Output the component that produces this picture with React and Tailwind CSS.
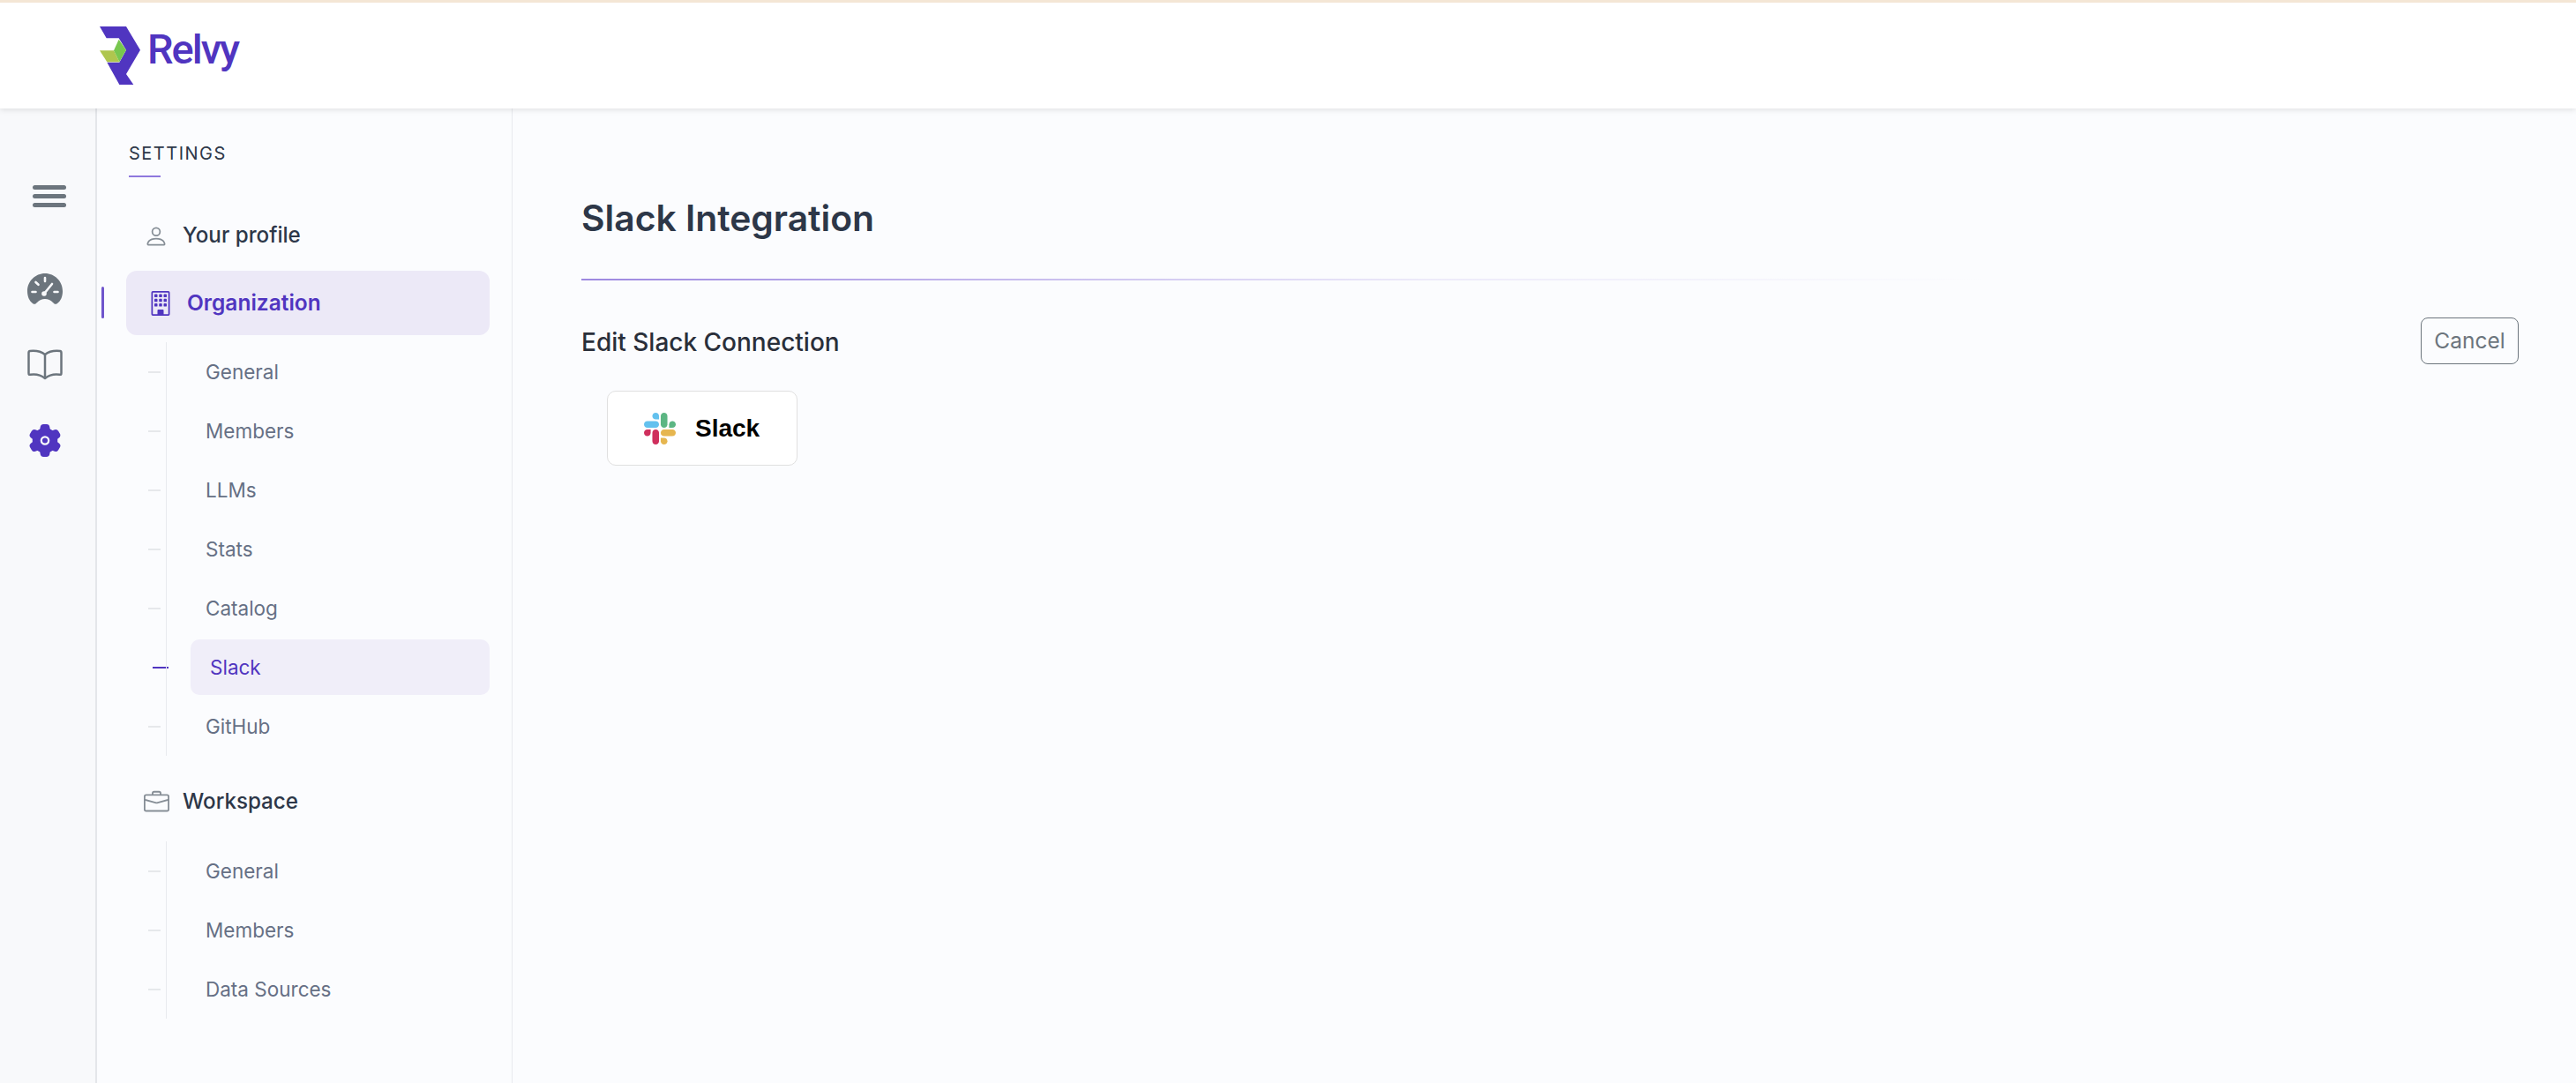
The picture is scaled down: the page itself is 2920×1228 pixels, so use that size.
import { BsBriefcase, BsBuilding, BsPerson } from "react-icons/bs";

const orgLinks = ["General", "Members", "LLMs", "Stats", "Catalog", "Slack", "GitHub"];
const workspaceLinks = ["General", "Members", "Data Sources"];

function Logo() {
  return (
    <svg viewBox="70 60 138 198" className="w-[46px] h-[66px] shrink-0">
      <polygon
        fill="#5035c0"
        points="70,60 160,60 208,140 160,222 185,258 137,258 95,182 137,182 160,140 135,100 93,100"
      />
      <polygon fill="#afc64e" points="70,142 118,142 137,181 95,181" />
      <polygon fill="#78c74f" points="118,142 135,104 160,140 137,181" />
    </svg>
  );
}

function Gauge() {
  return (
    <svg viewBox="0 0 40 35" className="w-[40px] h-[35px]">
      <path
        fill="#6c757d"
        d="M20 0C9 0 0 9 0 20c0 6 2 11 6 14 2 1.500 3 1 5-1 2.500-2.500 5.500-4 9-4s6.500 1.500 9 4c2 2 3 2.500 5 1 4-3 6-8 6-14C40 9 31 0 20 0z"
      />
      <g stroke="#f8f9fb" strokeWidth="2.600" strokeLinecap="round">
        <path d="M20 5v4M9.500 10l3 2.800M5.500 21h4M30.500 21h4" />
        <path d="M19 23l9-11" />
      </g>
      <circle cx="19" cy="23" r="2.800" fill="#f8f9fb" />
    </svg>
  );
}

function Book() {
  return (
    <svg viewBox="0 0 40 35" fill="none" stroke="#6c757d" strokeWidth="2.500" strokeLinejoin="round" className="w-[40px] h-[35px]">
      <path d="M20 6C15 2 8 1.500 3 2 1.500 2.200 1.500 3 1.500 4v23c0 2 .5 2 2 1.800C9 28 15 29 20 33c5-4 11-5 16.500-4.200 1.500.2 2 .2 2-1.800V4c0-1 0-1.800-1.500-2C32 1.500 25 2 20 6z" />
      <path d="M20 6v27" />
    </svg>
  );
}

function Gear() {
  return (
    <svg viewBox="2.700 2.250 18.600 19.500" className="w-[38px] h-[37px]">
      <path
        fill="#5035c0"
        fillRule="evenodd"
        d="M11.078 2.250c-.917 0-1.699.663-1.850 1.567L9.050 4.889c-.02.12-.115.26-.297.348a7.493 7.493 0 0 0-.986.57c-.166.115-.334.126-.45.083L6.300 5.508a1.875 1.875 0 0 0-2.282.819l-.922 1.597a1.875 1.875 0 0 0 .432 2.385l.84.692c.095.078.17.229.154.43a7.598 7.598 0 0 0 0 1.139c.015.2-.059.352-.153.43l-.841.692a1.875 1.875 0 0 0-.432 2.385l.922 1.597a1.875 1.875 0 0 0 2.282.818l1.019-.382c.115-.043.283-.031.45.082.312.214.641.405.985.57.182.088.277.228.297.35l.178 1.071c.151.904.933 1.567 1.850 1.567h1.844c.916 0 1.699-.663 1.850-1.567l.178-1.072c.02-.12.114-.26.297-.349.344-.165.673-.356.985-.57.167-.114.335-.125.45-.082l1.020.382a1.875 1.875 0 0 0 2.280-.819l.923-1.597a1.875 1.875 0 0 0-.432-2.385l-.84-.692c-.095-.078-.17-.229-.154-.43a7.614 7.614 0 0 0 0-1.139c-.016-.2.059-.352.153-.43l.84-.692c.708-.582.891-1.590.433-2.385l-.922-1.597a1.875 1.875 0 0 0-2.282-.818l-1.020.382c-.114.043-.282.031-.449-.083a7.490 7.490 0 0 0-.985-.57c-.183-.087-.277-.227-.297-.348l-.179-1.072a1.875 1.875 0 0 0-1.850-1.567h-1.843ZM12 14.800a2.800 2.800 0 1 0 0-5.600 2.800 2.800 0 0 0 0 5.600Z"
      />
      <circle cx="12" cy="12" r="1.600" fill="#5035c0" />
    </svg>
  );
}

function SlackLogo() {
  return (
    <svg viewBox="0 0 122.800 122.800" className="w-[36px] h-[36px] shrink-0">
      <path fill="#cf2f5d" d="M25.800 77.600c0 7.100-5.800 12.900-12.900 12.900S0 84.700 0 77.600s5.800-12.900 12.900-12.900h12.900v12.900z" />
      <path fill="#cf2f5d" d="M32.300 77.600c0-7.100 5.800-12.900 12.900-12.900s12.900 5.800 12.900 12.900v32.300c0 7.100-5.800 12.900-12.900 12.900s-12.900-5.800-12.900-12.900V77.600z" />
      <path fill="#63c1ee" d="M45.200 25.800c-7.100 0-12.900-5.800-12.900-12.900S38.100 0 45.200 0s12.900 5.800 12.900 12.900v12.900H45.200z" />
      <path fill="#63c1ee" d="M45.200 32.300c7.100 0 12.900 5.800 12.900 12.900s-5.800 12.900-12.900 12.900H12.900C5.800 58.100 0 52.300 0 45.200s5.800-12.900 12.900-12.900h32.300z" />
      <path fill="#5cb683" d="M97 45.200c0-7.100 5.800-12.900 12.900-12.900s12.900 5.800 12.900 12.900-5.800 12.900-12.900 12.900H97V45.200z" />
      <path fill="#5cb683" d="M90.500 45.200c0 7.100-5.800 12.900-12.900 12.900s-12.900-5.800-12.900-12.900V12.900C64.700 5.800 70.500 0 77.600 0s12.900 5.800 12.900 12.900v32.300z" />
      <path fill="#e6b64f" d="M77.600 97c7.100 0 12.900 5.800 12.900 12.900s-5.800 12.900-12.900 12.900-12.900-5.800-12.900-12.900V97h12.900z" />
      <path fill="#e6b64f" d="M77.600 90.500c-7.100 0-12.900-5.800-12.900-12.900s5.800-12.900 12.900-12.900h32.300c7.100 0 12.900 5.800 12.900 12.900s-5.800 12.900-12.900 12.900H77.600z" />
    </svg>
  );
}

function SubNav({ links, active }) {
  return (
    <div className="flex flex-col pl-[22px]">
      {links.map((label) => {
        const isActive = label === active;
        return (
          <div key={label} className="flex items-center h-[67px]">
            {isActive ? (
              <span className="w-[18px] h-[2px] ml-[5px] -mr-[3px] bg-[#5035c0]" />
            ) : (
              <span className="w-[14px] h-[2px] mr-[6px] bg-[#e6e8eb]" />
            )}
            <div className="flex items-center flex-1 h-full border-l border-[#e8eaee] pl-[27px]">
              {isActive ? (
                <div className="flex items-center w-[339px] h-[63px] pl-[22px] rounded-[10px] bg-[#f0eef9] text-[#5035c0] text-[22.500px]">
                  {label}
                </div>
              ) : (
                <div className="pl-[17px] text-[#667085] text-[22.500px]">{label}</div>
              )}
            </div>
          </div>
        );
      })}
    </div>
  );
}

export default function App() {
  return (
    <div className="flex flex-col w-[2920px] h-[1228px] overflow-hidden bg-[#fbfcfe] font-['Inter',sans-serif]">
      <header className="relative z-10 flex items-start h-[123px] pl-[113px] pt-[27px] bg-white border-t-[3px] border-[#f4e6d5] shadow-[0_2px_6px_rgba(0,0,0,0.1)]">
        <Logo />
        <span className="ml-[8px] -mt-[6px] text-[#5035c0] text-[47px] font-medium leading-[64px] tracking-[-2px] font-['Roboto',sans-serif]">
          Relvy
        </span>
      </header>

      <div className="flex flex-1 min-h-0">
        <aside className="flex flex-col w-[110px] shrink-0 pt-[87px] bg-[#f8f9fb] border-r-2 border-[#e4e6ea]">
          <div className="flex flex-col gap-[5px] w-[38px] ml-[37px]">
            <span className="h-[5px] rounded-full bg-[#6c757d]" />
            <span className="h-[5px] rounded-full bg-[#6c757d]" />
            <span className="h-[5px] rounded-full bg-[#6c757d]" />
          </div>
          <div className="ml-[31px] mt-[75px]"><Gauge /></div>
          <div className="ml-[31px] mt-[51px]"><Book /></div>
          <div className="ml-[32px] mt-[50px]"><Gear /></div>
        </aside>

        <nav className="flex flex-col w-[471px] shrink-0 pl-[36px] pr-[25px] pt-[37px] border-r border-[#e8eaee]">
          <div className="text-[20px] leading-[28px] tracking-[1.500px] text-[#2d3748]">SETTINGS</div>
          <div className="w-[36px] h-[2px] mt-[11px] bg-[#8f78dd]" />

          <div className="flex items-center h-[73px] mt-[30px] pl-[17px] text-[#2d3748] text-[24.200px] font-medium">
            <BsPerson className="w-[28px] h-[28px] text-[#868e96]" />
            <span className="ml-[16px]">Your profile</span>
          </div>

          <div className="relative flex items-center h-[73px] w-[412px] -ml-[3px] mt-[3px] pl-[25px] rounded-[12px] bg-[#ece9f7] text-[#5035c0] text-[24.500px] font-semibold">
            <span className="absolute -left-[28px] top-[18px] w-[3px] h-[36px] bg-[#6f55cc] rounded-full" />
            <BsBuilding className="w-[28px] h-[28px]" />
            <span className="ml-[16px]">Organization</span>
          </div>

          <div className="mt-[8px]">
            <SubNav links={orgLinks} active="Slack" />
          </div>

          <div className="flex items-center h-[73px] mt-[16px] pl-[17px] text-[#2d3748] text-[24.200px] font-medium">
            <BsBriefcase className="w-[29px] h-[29px] text-[#868e96]" />
            <span className="ml-[15px]">Workspace</span>
          </div>

          <div className="mt-[8px]">
            <SubNav links={workspaceLinks} />
          </div>
        </nav>

        <main className="flex flex-col flex-1 pl-[78px] pr-[65px] pt-[94px]">
          <h1 className="text-[40.800px] leading-[60px] font-semibold text-[#2d3748]">Slack Integration</h1>
          <div className="w-[1596px] h-[2px] mt-[39px] bg-[linear-gradient(90deg,#9d88e0_0%,#9d88e026_60%,transparent_100%)]" />
          <div className="flex items-center justify-between mt-[42px]">
            <h2 className="text-[28px] leading-[40px] mt-[3px] font-medium text-[#2a2f3a]">Edit Slack Connection</h2>
            <button className="w-[111px] h-[53px] rounded-[8px] border border-[#6c757d] text-[24.500px] text-[#6c757d]">
              Cancel
            </button>
          </div>
          <div className="flex items-center w-[216px] h-[85px] ml-[29px] mt-[30px] pl-[41px] rounded-[10px] bg-white border border-[#e0e0e0]">
            <SlackLogo />
            <span className="ml-[22px] text-[28px] font-bold text-black font-['Liberation_Sans',sans-serif]">Slack</span>
          </div>
        </main>
      </div>
    </div>
  );
}
